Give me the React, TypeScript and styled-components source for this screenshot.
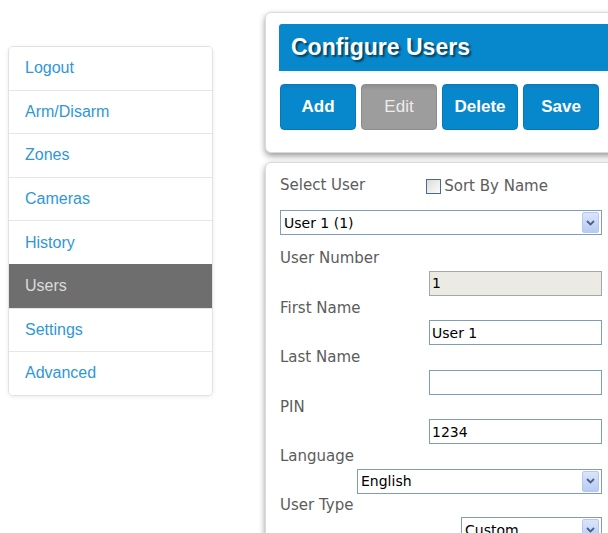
import React, { useState } from 'react';
import styled, { createGlobalStyle } from 'styled-components';

const GlobalStyle = createGlobalStyle`
  html, body {
    margin: 0;
    padding: 0;
    background: #fff;
    overflow: hidden;
  }
`;

const NAV_ITEMS = ['Logout', 'Arm/Disarm', 'Zones', 'Cameras', 'History', 'Users', 'Settings', 'Advanced'];

const Page = styled.div`
  display: flex;
  align-items: flex-start;
  width: 608px;
  height: 533px;
  overflow: hidden;
  font-family: "Liberation Sans", Arial, sans-serif;
`;

const Sidebar = styled.nav`
  flex: none;
  width: 203px;
  margin: 46px 0 0 8px;
  border: 1px solid #e2e2e2;
  border-radius: 5px;
  box-shadow: 0 1px 4px rgba(0, 0, 0, 0.08);
  background: #fff;
  overflow: hidden;
`;

const NavItem = styled.a<{ $active?: boolean }>`
  display: flex;
  align-items: center;
  height: 42.6px;
  padding-left: 16px;
  font-size: 16px;
  color: ${p => (p.$active ? '#dcdcdc' : '#2f97d6')};
  background: ${p => (p.$active ? '#6e6e6e' : '#fff')};
  border-top: 1px solid ${p => (p.$active ? '#6e6e6e' : '#e6e6e6')};
  cursor: pointer;
  &:first-child { border-top: none; }
`;

const Main = styled.div`
  flex: none;
  display: flex;
  flex-direction: column;
  gap: 9px;
  margin: 12px 0 0 52px;
`;

const Panel = styled.section<{ $width: number }>`
  width: ${p => p.$width}px;
  box-sizing: border-box;
  background: #fff;
  border: 1px solid #dadada;
  border-radius: 6px;
  box-shadow: 0 3px 6px rgba(0, 0, 0, 0.4);
`;

const Toolbar = styled(Panel)`
  padding: 11px 0 22px 13px;
`;

const Header = styled.h1`
  margin: 0;
  height: 47px;
  display: flex;
  align-items: center;
  padding-left: 12px;
  background: #0888cc;
  border-radius: 3px 0 0 0;
  color: #fff;
  font-size: 23px;
  font-weight: bold;
  text-shadow: 2px 2px 2px rgba(0, 0, 0, 0.55);
`;

const ButtonRow = styled.div`
  display: flex;
  gap: 5px;
  margin: 13px 0 0 1px;
`;

const ActionButton = styled.button<{ $disabled?: boolean }>`
  width: 76px;
  height: 46px;
  border: 1px solid ${p => (p.$disabled ? '#8c8c8c' : '#0679b8')};
  border-radius: 4px;
  background: ${p => (p.$disabled ? 'linear-gradient(#8f8f8f, #9d9d9d 12%)' : 'linear-gradient(#0a7fc0, #0888cc 12%)')};
  color: ${p => (p.$disabled ? '#ececec' : '#fff')};
  font-family: "Liberation Sans", Arial, sans-serif;
  font-size: 17px;
  font-weight: ${p => (p.$disabled ? 'normal' : 'bold')};
  cursor: pointer;
`;

const Form = styled(Panel)`
  padding: 11px 0 0 14px;
  height: 380px;
  font-family: "DejaVu Sans", Tahoma, sans-serif;
`;

const Fields = styled.div`
  width: 322px;
  display: flex;
  flex-direction: column;
`;

const TopRow = styled.div`
  display: flex;
  align-items: center;
  height: 24px;
  margin-bottom: 12px;
`;

const Label = styled.div`
  height: 23.5px;
  line-height: 23px;
  font-size: 15px;
  color: #5c5c5c;
`;

const SortToggle = styled.label`
  display: flex;
  align-items: center;
  gap: 3px;
  margin-left: 61px;
  font-size: 15px;
  color: #5c5c5c;
`;

const CheckBox = styled.span`
  width: 13px;
  height: 13px;
  border: 1px solid #4a6a8f;
  background: linear-gradient(135deg, #dcdcd6, #fbfbfb);
`;

const InputRow = styled.div<{ $width: number; $gap?: number }>`
  align-self: flex-end;
  width: ${p => p.$width}px;
  margin-bottom: ${p => p.$gap ?? 1}px;
`;

const TextInput = styled.div<{ $readOnly?: boolean }>`
  box-sizing: border-box;
  height: 25px;
  padding-left: 2px;
  display: flex;
  align-items: center;
  border: 1px solid ${p => (p.$readOnly ? '#a6a6a6' : '#7f9db9')};
  background: ${p => (p.$readOnly ? '#ebebe4' : '#fff')};
  font-size: 14px;
  color: #000;
`;

const SelectBox = styled.div`
  box-sizing: border-box;
  height: 25px;
  display: flex;
  align-items: center;
  border: 1px solid #7f9db9;
  background: #fff;
  font-size: 14px;
  color: #000;
`;

const SelectText = styled.span`
  flex: 1;
  padding-left: 3px;
`;

const ArrowButton = styled.span`
  width: 15px;
  height: 19px;
  margin-right: 2px;
  display: flex;
  align-items: center;
  justify-content: center;
  border: 1px solid #b7c8ef;
  border-radius: 2px;
  background: linear-gradient(#dbe5fb, #b8cbf4);
`;

const Chevron = () => (
  <svg width="9" height="6" viewBox="0 0 9 6">
    <path d="M1 1 L4.5 4.5 L8 1" fill="none" stroke="#4d6185" strokeWidth="1.8" />
  </svg>
);

const Select = ({ value }: { value: string }) => (
  <SelectBox>
    <SelectText>{value}</SelectText>
    <ArrowButton><Chevron /></ArrowButton>
  </SelectBox>
);

export default function App() {
  const [active, setActive] = useState('Users');

  return (
    <Page>
      <GlobalStyle />
      <Sidebar>
        {NAV_ITEMS.map(item => (
          <NavItem key={item} $active={item === active} onClick={() => setActive(item)}>
            {item}
          </NavItem>
        ))}
      </Sidebar>
      <Main>
        <Toolbar $width={362}>
          <Header>Configure Users</Header>
          <ButtonRow>
            <ActionButton>Add</ActionButton>
            <ActionButton $disabled>Edit</ActionButton>
            <ActionButton>Delete</ActionButton>
            <ActionButton>Save</ActionButton>
          </ButtonRow>
        </Toolbar>
        <Form $width={352}>
          <Fields>
            <TopRow>
              <Label>Select User</Label>
              <SortToggle>
                <CheckBox />
                Sort By Name
              </SortToggle>
            </TopRow>
            <InputRow $width={322} $gap={12}>
              <Select value="User 1 (1)" />
            </InputRow>
            <Label>User Number</Label>
            <InputRow $width={173}>
              <TextInput $readOnly>1</TextInput>
            </InputRow>
            <Label>First Name</Label>
            <InputRow $width={173}>
              <TextInput>User 1</TextInput>
            </InputRow>
            <Label>Last Name</Label>
            <InputRow $width={173}>
              <TextInput />
            </InputRow>
            <Label>PIN</Label>
            <InputRow $width={173}>
              <TextInput>1234</TextInput>
            </InputRow>
            <Label>Language</Label>
            <InputRow $width={245} $gap={0}>
              <Select value="English" />
            </InputRow>
            <Label>User Type</Label>
            <InputRow $width={141}>
              <Select value="Custom" />
            </InputRow>
          </Fields>
        </Form>
      </Main>
    </Page>
  );
}
